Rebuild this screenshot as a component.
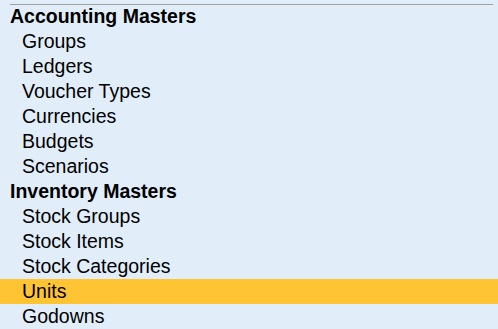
import React from 'react';

type Row = { label: string; header?: boolean };

const ROWS: Row[] = [
  { label: 'Accounting Masters', header: true },
  { label: 'Groups' },
  { label: 'Ledgers' },
  { label: 'Voucher Types' },
  { label: 'Currencies' },
  { label: 'Budgets' },
  { label: 'Scenarios' },
  { label: 'Inventory Masters', header: true },
  { label: 'Stock Groups' },
  { label: 'Stock Items' },
  { label: 'Stock Categories' },
  { label: 'Units' },
  { label: 'Godowns' },
];

const SELECTED = 'Units';

const App: React.FC = () => {
  return (
    <div className="w-[498px] h-[329px] overflow-hidden bg-[#e1eefa] pt-[4px] text-black font-['Liberation_Sans',Arial,sans-serif] text-[19.5px]">
      {/* top rule */}
      <div className="h-px ml-[10px] mr-[5px] bg-[#a0a0a0]" />
      {ROWS.map((row, i) => {
        const selected = row.label === SELECTED;
        if (row.header) {
          return (
            <div
              key={row.label}
              className={`${i === 0 ? 'h-[24px] leading-[22px]' : 'h-[25px] leading-[24px]'} pl-[10px] font-bold whitespace-nowrap`}
            >
              {row.label}
            </div>
          );
        }
        return (
          <div
            key={row.label}
            className={`h-[25px] leading-[24px] pl-[22px] whitespace-nowrap ${selected ? 'bg-[#ffc433]' : ''}`}
          >
            {row.label}
          </div>
        );
      })}
    </div>
  );
};

export default App;
